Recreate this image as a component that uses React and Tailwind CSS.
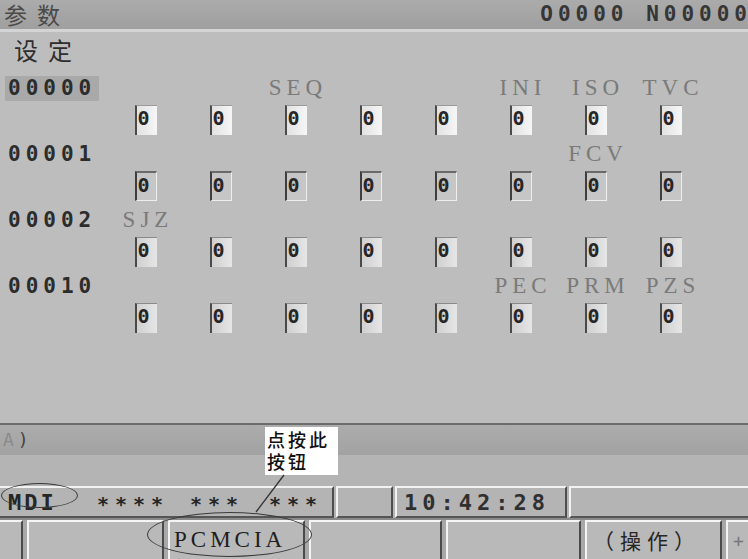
export default function App() {
  const params = [
    { num: "00000", hl: true, labels: { 3: "SEQ", 6: "INI", 7: "ISO", 8: "TVC" }, row: 1 },
    { num: "00001", labels: { 7: "FCV" }, row: 2 },
    { num: "00002", labels: { 1: "SJZ" }, row: 3 },
    { num: "00010", labels: { 6: "PEC", 7: "PRM", 8: "PZS" }, row: 3 },
  ];
  const cols = [1, 2, 3, 4, 5, 6, 7, 8];
  const boxCls = {
    1: "bg-linear-to-r from-[#e2e2e2] to-[#f6f6f6] border-l-2 border-l-[#4a4a4a] border-t border-t-[#9a9a9a]",
    2: "bg-[#c6c6c6] border-l-2 border-l-[#3e3e3e] border-t-2 border-t-[#6a6a6a] border-r border-r-[#eeeeee] border-b border-b-[#eeeeee]",
    3: "bg-linear-to-r from-[#d0d0d0] to-[#e6e6e6] border-l-2 border-l-[#4a4a4a] border-t border-t-[#8a8a8a]",
  };
  const mono = "font-['DejaVu_Sans_Mono',monospace] slashed-zero";

  return (
    <div className="relative w-[748px] h-[559px] overflow-hidden bg-[#bdbdbd] flex flex-col font-['Noto_Sans_CJK_SC',sans-serif]">
      {/* title bar */}
      <div className="h-[29px] flex items-center justify-between bg-linear-to-b from-[#ababab] to-[#9f9f9f]">
        <span className="pl-[4px] text-[23px] leading-none tracking-[10px] text-[#4a4a4a]">参数</span>
        <span className={`${mono} font-bold text-[21px] leading-none tracking-[5px] text-[#363636] mr-[-4px] whitespace-pre`}>O0000 N00000</span>
      </div>
      <div className="h-[3px] bg-[#d4d4d4]" />

      {/* main */}
      <div className="h-[391px] bg-[#bdbdbd] pt-[3px]">
        <div className="pl-[14px] text-[24px] leading-[30px] tracking-[10px] text-[#2e2e2e]">设定</div>
        <div className="mt-[10px] flex flex-col">
          {params.map((p) => (
            <div key={p.num} className="flex flex-col mb-[6px]">
              <div className="h-[26px] grid grid-cols-[108px_repeat(8,75px)] items-center">
                <div className="pl-[5px]">
                  <span className={`${mono} font-bold text-[21px] leading-[25px] tracking-[5px] text-[#2c2c2c] inline-block px-[3px] ${p.hl ? "bg-[#a9a9a9]" : ""}`}>
                    {p.num}
                  </span>
                </div>
                {cols.map((c) => (
                  <div key={c} className="flex justify-center">
                    {p.labels[c] ? (
                      <span className="font-['Liberation_Serif',serif] text-[23px] leading-[26px] tracking-[5px] mr-[-5px] text-[#7a7a7a]">
                        {p.labels[c]}
                      </span>
                    ) : null}
                  </div>
                ))}
              </div>
              <div className="mt-[4px] h-[30px] grid grid-cols-[108px_repeat(8,75px)]">
                <div />
                {cols.map((c) => (
                  <div key={c} className="flex justify-center">
                    <div className={`w-[22px] h-[30px] ${boxCls[p.row]} ${mono} font-bold text-[20px] leading-[24px] pl-[1px] text-[#262626]`}>
                      0
                    </div>
                  </div>
                ))}
              </div>
            </div>
          ))}
        </div>
      </div>

      {/* input line */}
      <div className="h-[2px] bg-[#6b6b6b]" />
      <div className="h-[30px] bg-linear-to-b from-[#acacac] to-[#a2a2a2] flex items-center">
        <span className={`${mono} pl-[3px] text-[18px] leading-[30px] tracking-[4px] text-[#8a8a8a]`}>
          A<span className="text-[#444]">)</span>
        </span>
      </div>
      <div className="h-[30px] bg-[#b4b4b4]" />

      {/* status bar */}
      <div className="h-[33px] bg-[#b4b4b4] flex gap-[2px] pt-[1px]">
        <div className="w-[334px] border-t-2 border-t-[#f2f2f2] border-r-2 border-r-[#4e4e4e] border-b-2 border-b-[#555] flex items-center">
          <span className={`${mono} font-bold w-[97px] pl-[8px] text-[22px] tracking-[3px] text-[#262626]`}>MDI</span>
          <span className={`${mono} font-bold w-[93px] text-[20px] tracking-[6px] text-[#262626] translate-y-[2px]`}>****</span>
          <span className={`${mono} font-bold w-[79px] text-[20px] tracking-[6px] text-[#262626] translate-y-[2px]`}>***</span>
          <span className={`${mono} font-bold text-[20px] tracking-[6px] text-[#262626] translate-y-[2px]`}>***</span>
        </div>
        <div className="w-[57px] border-t-2 border-t-[#f2f2f2] border-l-2 border-l-[#f2f2f2] border-r-2 border-r-[#4e4e4e] border-b-2 border-b-[#555]" />
        <div className="w-[172px] border-t-2 border-t-[#f2f2f2] border-l-2 border-l-[#f2f2f2] border-r-2 border-r-[#4e4e4e] border-b-2 border-b-[#555] flex items-center">
          <span className={`${mono} font-bold pl-[7px] text-[22px] tracking-[5px] text-[#303030]`}>10:42:28</span>
        </div>
        <div className="flex-1 border-t-2 border-t-[#f2f2f2] border-l-2 border-l-[#f2f2f2] border-b-2 border-b-[#555]" />
      </div>

      {/* soft keys */}
      <div className="h-[41px] bg-[#8a8a8a] pt-[2px]">
        <div className="h-[39px] bg-[#a8a8a8] flex gap-[4px]">
          <div className="w-[23px] bg-[#b9b9b9] border-t-2 border-t-[#f4f4f4] border-r-2 border-r-[#4a4a4a]" />
          <div className="w-[137px] bg-[#b9b9b9] border-t-2 border-t-[#f4f4f4] border-l-2 border-l-[#f4f4f4] border-r-2 border-r-[#4a4a4a]" />
          <div className="w-[137px] bg-[#b9b9b9] border-t-2 border-t-[#f4f4f4] border-l-2 border-l-[#f4f4f4] border-r-2 border-r-[#4a4a4a] flex items-center">
            <span className="font-['Liberation_Serif',serif] pl-[4px] text-[23px] tracking-[4px] text-[#1e1e1e]">PCMCIA</span>
          </div>
          <div className="w-[133px] bg-[#b9b9b9] border-t-2 border-t-[#f4f4f4] border-l-2 border-l-[#f4f4f4] border-r-2 border-r-[#4a4a4a]" />
          <div className="w-[135px] bg-[#b9b9b9] border-t-2 border-t-[#f4f4f4] border-l-2 border-l-[#f4f4f4] border-r-2 border-r-[#4a4a4a]" />
          <div className="w-[137px] bg-[#b9b9b9] border-t-2 border-t-[#f4f4f4] border-l-2 border-l-[#f4f4f4] border-r-2 border-r-[#4a4a4a] flex items-center">
            <span className="pl-[6px] text-[21px] tracking-[6px] text-[#262626]">（操作）</span>
          </div>
          <div className="flex-1 bg-[#b9b9b9] border-t-2 border-t-[#f4f4f4] border-l-2 border-l-[#f4f4f4] flex items-center">
            <span className={`${mono} pl-[5px] text-[18px] text-[#777]`}>+</span>
          </div>
        </div>
      </div>

      {/* annotations */}
      <div className="absolute left-[1px] top-[483px] w-[77px] h-[25px] rounded-[50%] border-[1.5px] border-[#3a3a3a]" />
      <div className="absolute left-[147px] top-[512px] w-[165px] h-[45px] rounded-[50%] border-[1.5px] border-[#3a3a3a]" />
      <div className="absolute left-[265px] top-[427px] w-[73px] h-[48px] bg-white pl-[2px] pt-[1px] text-[18px] font-medium leading-[22px] tracking-[3px] text-[#111]">
        <div>点按此</div>
        <div>按钮</div>
      </div>
      <svg className="absolute left-0 top-0 pointer-events-none" width="748" height="559">
        <line x1="284" y1="475" x2="256" y2="512" stroke="#333" strokeWidth="1.3" />
      </svg>
    </div>
  );
}
